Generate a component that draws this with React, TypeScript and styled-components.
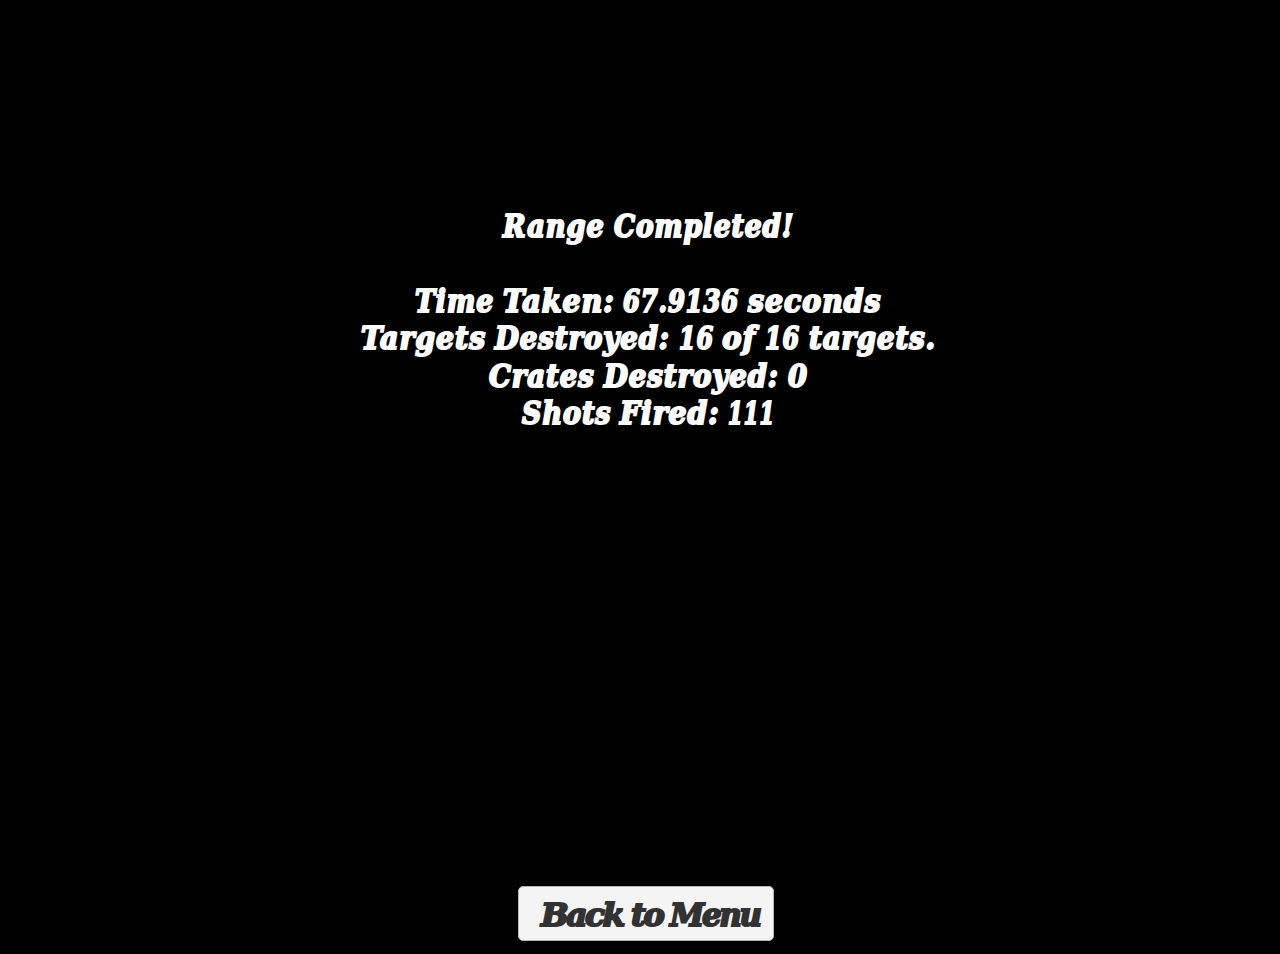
import { useLayoutEffect, useRef, useState } from 'react'
import styled, { createGlobalStyle } from 'styled-components'

interface IWord {
  text: string
  width: number
}

const GlobalStyle = createGlobalStyle`
  * {
    box-sizing: border-box;
  }
  body {
    margin: 0;
    background-color: #000000;
    overflow: hidden;
  }
`

const StyledScreen = styled.main`
  width: 100%;
  height: 100vh;
  padding: 208px 0 13px 17px;
  display: flex;
  flex-direction: column;
  align-items: center;
  justify-content: space-between;
  background-color: #000000;
  font-family: 'DejaVu Serif Condensed', 'DejaVu Serif', serif;
  font-style: italic;
  font-weight: bold;
  font-stretch: condensed;
`

const StyledResults = styled.section`
  display: flex;
  flex-direction: column;
  align-items: center;
  color: #fcfcfc;
  font-size: 32px;
  line-height: 37.4px;
  letter-spacing: 1px;
  -webkit-text-stroke: 2px #fcfcfc;
`

const StyledTitle = styled.h1`
  height: 37.4px;
  margin: 0 0 37.4px;
  font-size: inherit;
  font-weight: inherit;
  white-space: nowrap;
  word-spacing: -2px;
`

const StyledStat = styled.p`
  height: 37.4px;
  margin: 0;
  white-space: nowrap;
  word-spacing: -2.4px;
`

const StyledButton = styled.button`
  width: 256px;
  height: 55px;
  margin-right: 5px;
  padding: 3px 0 0 9px;
  border: 1px solid #b4b4b4;
  border-radius: 5px;
  background-color: #f4f4f4;
  color: #323232;
  font: inherit;
  font-family: 'DejaVu Serif', serif;
  font-stretch: normal;
  font-size: 32px;
  letter-spacing: -2.4px;
  word-spacing: -0.6px;
  white-space: nowrap;
  -webkit-text-stroke: 2px #323232;
  cursor: pointer;
`

const StyledWord = styled.span<{ $width: number }>`
  display: inline-block;
  width: ${(props) => props.$width}px;
  text-align: left;
`

const StyledGlyphs = styled.span`
  display: inline-block;
  transform-origin: left;
`

// Squeezes or stretches a word so that it fills its slot in the line
const Word = (props: IWord) => {
  const ref = useRef<HTMLSpanElement>(null)
  const [scale, setScale] = useState(1)

  useLayoutEffect(() => {
    if (ref.current) {
      setScale(props.width / ref.current.offsetWidth)
    }
  }, [props.text, props.width])

  return (
    <StyledWord $width={props.width}>
      <StyledGlyphs ref={ref} style={{ transform: `scaleX(${scale})` }}>
        {props.text}
      </StyledGlyphs>
    </StyledWord>
  )
}

const Words = (props: { words: IWord[] }) => (
  <>
    {props.words.map((word, i) => (
      <span key={i}>
        {i > 0 && ' '}
        <Word text={word.text} width={word.width} />
      </span>
    ))}
  </>
)

const title: IWord[] = [
  { text: 'Range', width: 102 },
  { text: 'Completed!', width: 180 },
]

const stats: IWord[][] = [
  [
    { text: 'Time', width: 79 },
    { text: 'Taken:', width: 112 },
    { text: '67.9136', width: 116 },
    { text: 'seconds', width: 134 },
  ],
  [
    { text: 'Targets', width: 125 },
    { text: 'Destroyed:', width: 175 },
    { text: '16', width: 35 },
    { text: 'of', width: 34 },
    { text: '16', width: 35 },
    { text: 'targets.', width: 127 },
  ],
  [
    { text: 'Crates', width: 106 },
    { text: 'Destroyed:', width: 175 },
    { text: '0', width: 20 },
  ],
  [
    { text: 'Shots', width: 89 },
    { text: 'Fired:', width: 100 },
    { text: '111', width: 47 },
  ],
]

const buttonLabel: IWord[] = [
  { text: 'Back', width: 82 },
  { text: 'to', width: 31 },
  { text: 'Menu', width: 90 },
]

const App = () => {
  return (
    <>
      <GlobalStyle />
      <StyledScreen>
        <StyledResults>
          <StyledTitle>
            <Words words={title} />
          </StyledTitle>
          {stats.map((words, i) => (
            <StyledStat key={i}>
              <Words words={words} />
            </StyledStat>
          ))}
        </StyledResults>
        <StyledButton>
          <Words words={buttonLabel} />
        </StyledButton>
      </StyledScreen>
    </>
  )
}

export default App
